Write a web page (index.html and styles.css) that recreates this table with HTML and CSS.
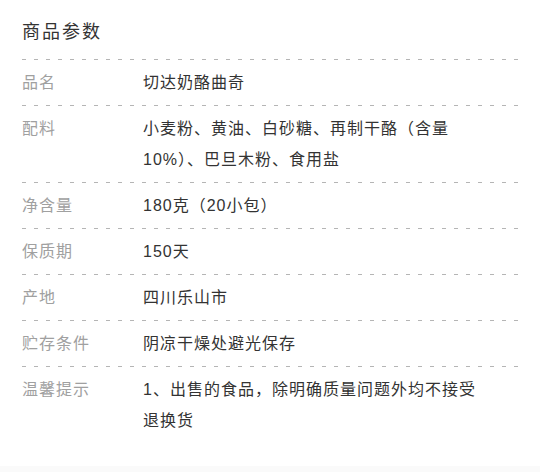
FILE: index.html
```html
<!DOCTYPE html>
<html lang="zh-CN">
<head>
<meta charset="utf-8">
<title>商品参数</title>
<link rel="stylesheet" href="styles.css">
</head>
<body>
<div class="panel">
  <h2 class="title">商品参数</h2>
  <div class="params">
    <div class="row"><div class="label">品名</div><div class="value">切达奶酪曲奇</div></div>
    <div class="row"><div class="label">配料</div><div class="value">小麦粉、黄油、白砂糖、再制干酪（含量10%）、巴旦木粉、食用盐</div></div>
    <div class="row"><div class="label">净含量</div><div class="value">180克（20小包）</div></div>
    <div class="row"><div class="label">保质期</div><div class="value">150天</div></div>
    <div class="row"><div class="label">产地</div><div class="value">四川乐山市</div></div>
    <div class="row"><div class="label">贮存条件</div><div class="value">阴凉干燥处避光保存</div></div>
    <div class="row"><div class="label">温馨提示</div><div class="value">1、出售的食品，除明确质量问题外均不接受退换货</div></div>
  </div>
</div>
</body>
</html>
```
FILE: styles.css
```css
html, body {
  margin: 0;
  padding: 0;
  background: #fafafa;
}
body {
  font-family: "Liberation Sans", "Noto Sans CJK SC", sans-serif;
  color: #333;
}
.panel {
  background: #fff;
  padding: 20px 22px 23px 22px;
}
.title {
  margin: 0 0 15px 0;
  font-size: 18px;
  line-height: 24px;
  font-weight: normal;
  letter-spacing: 2px;
  color: #333;
}
.row {
  display: flex;
  padding: 8px 0 7px 0;
  background-image: repeating-linear-gradient(to right, #b5b5b5 0 4px, transparent 4px 12px);
  background-size: 100% 1px;
  background-repeat: no-repeat;
  background-position: 0 0;
  font-size: 16px;
  line-height: 31px;
  letter-spacing: 1px;
}
.label {
  flex: 0 0 121px;
  color: #a0a0a0;
}
.value {
  width: 336px;
  color: #333;
}
```
